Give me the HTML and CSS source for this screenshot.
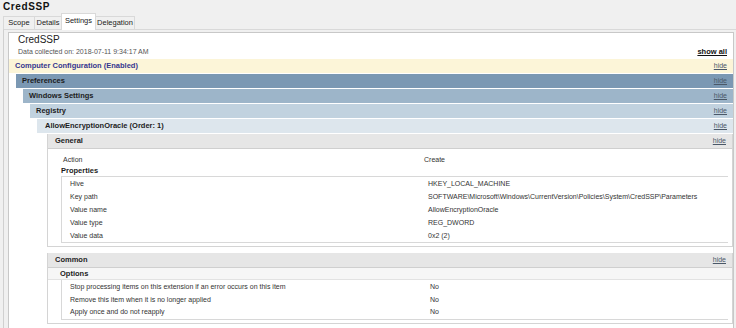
FILE: index.html
```html
<!DOCTYPE html>
<html>
<head>
	<link rel="stylesheet" href="styles.css">
	<title>CredSSP</title>
</head>
<body>
	<div class="title">CredSSP</div>
	<div class="tabs">
		<div class="tab t-scope">Scope</div>
		<div class="tab t-details">Details</div>
		<div class="tab active t-settings">Settings</div>
		<div class="tab t-deleg">Delegation</div>
	</div>
	<div class="page">
		<div class="panel">
			<div class="head">
				<div class="name">CredSSP</div>
				<div class="meta"><span>Data collected on: 2018-07-11 9:34:17 AM</span><a class="showall">show all</a></div>
			</div>
			<div class="bar b-cc"><span>Computer Configuration (Enabled)</span><a class="hide">hide</a></div>
			<div class="lvl">
				<div class="bar b-pref"><span>Preferences</span><a class="hide">hide</a></div>
				<div class="lvl">
					<div class="bar b-ws"><span>Windows Settings</span><a class="hide">hide</a></div>
					<div class="lvl">
						<div class="bar b-reg"><span>Registry</span><a class="hide">hide</a></div>
						<div class="lvl">
							<div class="bar b-item"><span>AllowEncryptionOracle (Order: 1)</span><a class="hide">hide</a></div>
							<div class="lvl deep">
								<div class="sect">
									<div class="bar b-gen"><span>General</span><a class="hide">hide</a></div>
									<div class="sect-body">
										<div class="row action"><span class="lbl">Action</span><span>Create</span></div>
										<div class="subhead">Properties</div>
										<div class="box">
											<div class="row"><span class="lbl">Hive</span><span>HKEY_LOCAL_MACHINE</span></div>
											<div class="row"><span class="lbl">Key path</span><span>SOFTWARE\Microsoft\Windows\CurrentVersion\Policies\System\CredSSP\Parameters</span></div>
											<div class="row"><span class="lbl">Value name</span><span>AllowEncryptionOracle</span></div>
											<div class="row"><span class="lbl">Value type</span><span>REG_DWORD</span></div>
											<div class="row"><span class="lbl">Value data</span><span>0x2 (2)</span></div>
										</div>
									</div>
								</div>
								<div class="sect common">
									<div class="bar b-gen"><span>Common</span><a class="hide">hide</a></div>
									<div class="sect-body">
										<div class="subhead band">Options</div>
										<div class="box opts">
											<div class="row"><span class="lbl">Stop processing items on this extension if an error occurs on this item</span><span>No</span></div>
											<div class="row"><span class="lbl">Remove this item when it is no longer applied</span><span>No</span></div>
											<div class="row"><span class="lbl">Apply once and do not reapply</span><span>No</span></div>
										</div>
									</div>
								</div>
							</div>
						</div>
					</div>
				</div>
			</div>
		</div>
	</div>
</body>
</html>
```

FILE: styles.css
```css
html {
	font-family: "Liberation Sans", Arial, sans-serif;
}

body {
	margin: 0;
	width: 736px;
	height: 328px;
	overflow: hidden;
	background-color: #f0f0f0;
	color: #333;
	font-size: 7px
}

.title {
	height: 13px;
	line-height: 13px;
	padding-left: 3px;
	font-size: 10px;
	font-weight: bold;
	letter-spacing: 0.6px;
	color: #111
}

.tabs {
	display: flex;
	align-items: flex-end;
	height: 16px;
	padding-left: 3px
}

.tab {
	height: 12px;
	line-height: 12px;
	text-align: center;
	font-size: 7.5px;
	color: #222;
	border: 1px solid #d9d9d9;
	border-bottom: none;
	background-color: #f0f0f0;
	margin-right: -1px
}

.tab.active {
	height: 16px;
	line-height: 14px;
	background-color: #fff;
	position: relative;
	z-index: 1;
	margin-bottom: -1px
}

.t-scope { width: 30px }
.t-details { width: 26px }
.t-settings { width: 33px }
.t-deleg { width: 38px }

.page {
	margin-left: 3px;
	border-left: 1px solid #d0d0d0;
	border-top: 1px solid #d9d9d9;
	padding: 2px 2px 0 4px;
	height: 300px
}

.panel {
	background-color: #fff;
	border: 1px solid #c8c8c8;
	height: 300px
}

.head {
	padding: 0 6px 0 9px;
	margin-bottom: 2px
}

.name {
	font-size: 10px;
	line-height: 14px;
	color: #222
}

.meta {
	display: flex;
	justify-content: space-between;
	line-height: 10px;
	color: #555
}

.showall {
	font-weight: bold;
	font-size: 7.5px;
	color: #111;
	text-decoration: underline
}

.bar {
	display: flex;
	justify-content: space-between;
	height: 14px;
	line-height: 14px;
	padding: 0 6px;
	border-bottom: 1px solid #fff;
	font-size: 7.5px;
	font-weight: bold;
	color: #1c1c1c
}

.hide {
	font-weight: normal;
	font-size: 7px;
	color: #4a5868;
	text-decoration: underline
}

.b-cc {
	background-color: #fcf5d8;
	color: #35358f
}

.b-pref { background-color: #7b98b3 }
.b-ws { background-color: #9db5c9 }
.b-reg { background-color: #c1d2df }
.b-item { background-color: #dde6ed; padding-left: 8px }

.lvl {
	margin-left: 7px
}

.lvl.deep {
	margin-left: 10px
}

.sect {
	border: 1px solid #d4d4d4;
	border-top: none;
	margin-bottom: 6px
}

.sect .b-gen {
	background-color: #e6e6e6;
	border-bottom: 1px solid #cfcfcf;
	padding-left: 7px
}

.sect-body {
	padding-bottom: 3px
}

.row {
	display: grid;
	grid-template-columns: 358px 1fr;
	height: 13px;
	line-height: 13px;
	padding-left: 8px
}

.row.action {
	margin-top: 4px;
	grid-template-columns: 361px 1fr;
	padding-left: 15px
}

.subhead {
	height: 10px;
	line-height: 10px;
	padding-left: 13px;
	font-weight: bold;
	font-size: 7.5px;
	color: #1c1c1c
}

.subhead.band {
	height: 11px;
	line-height: 12px;
	padding-left: 12px;
	background-color: #f6f6f6;
	border-bottom: 1px solid #e2e2e2
}

.box {
	margin: 0 4px 0 13px;
	border: 1px solid #d8d8d8;
	border-right: none
}

.box.opts {
	border-top: none;
	padding-top: 1px
}

.opts .row {
	height: 12.7px;
	line-height: 12.7px;
	grid-template-columns: 360px 1fr
}
```
